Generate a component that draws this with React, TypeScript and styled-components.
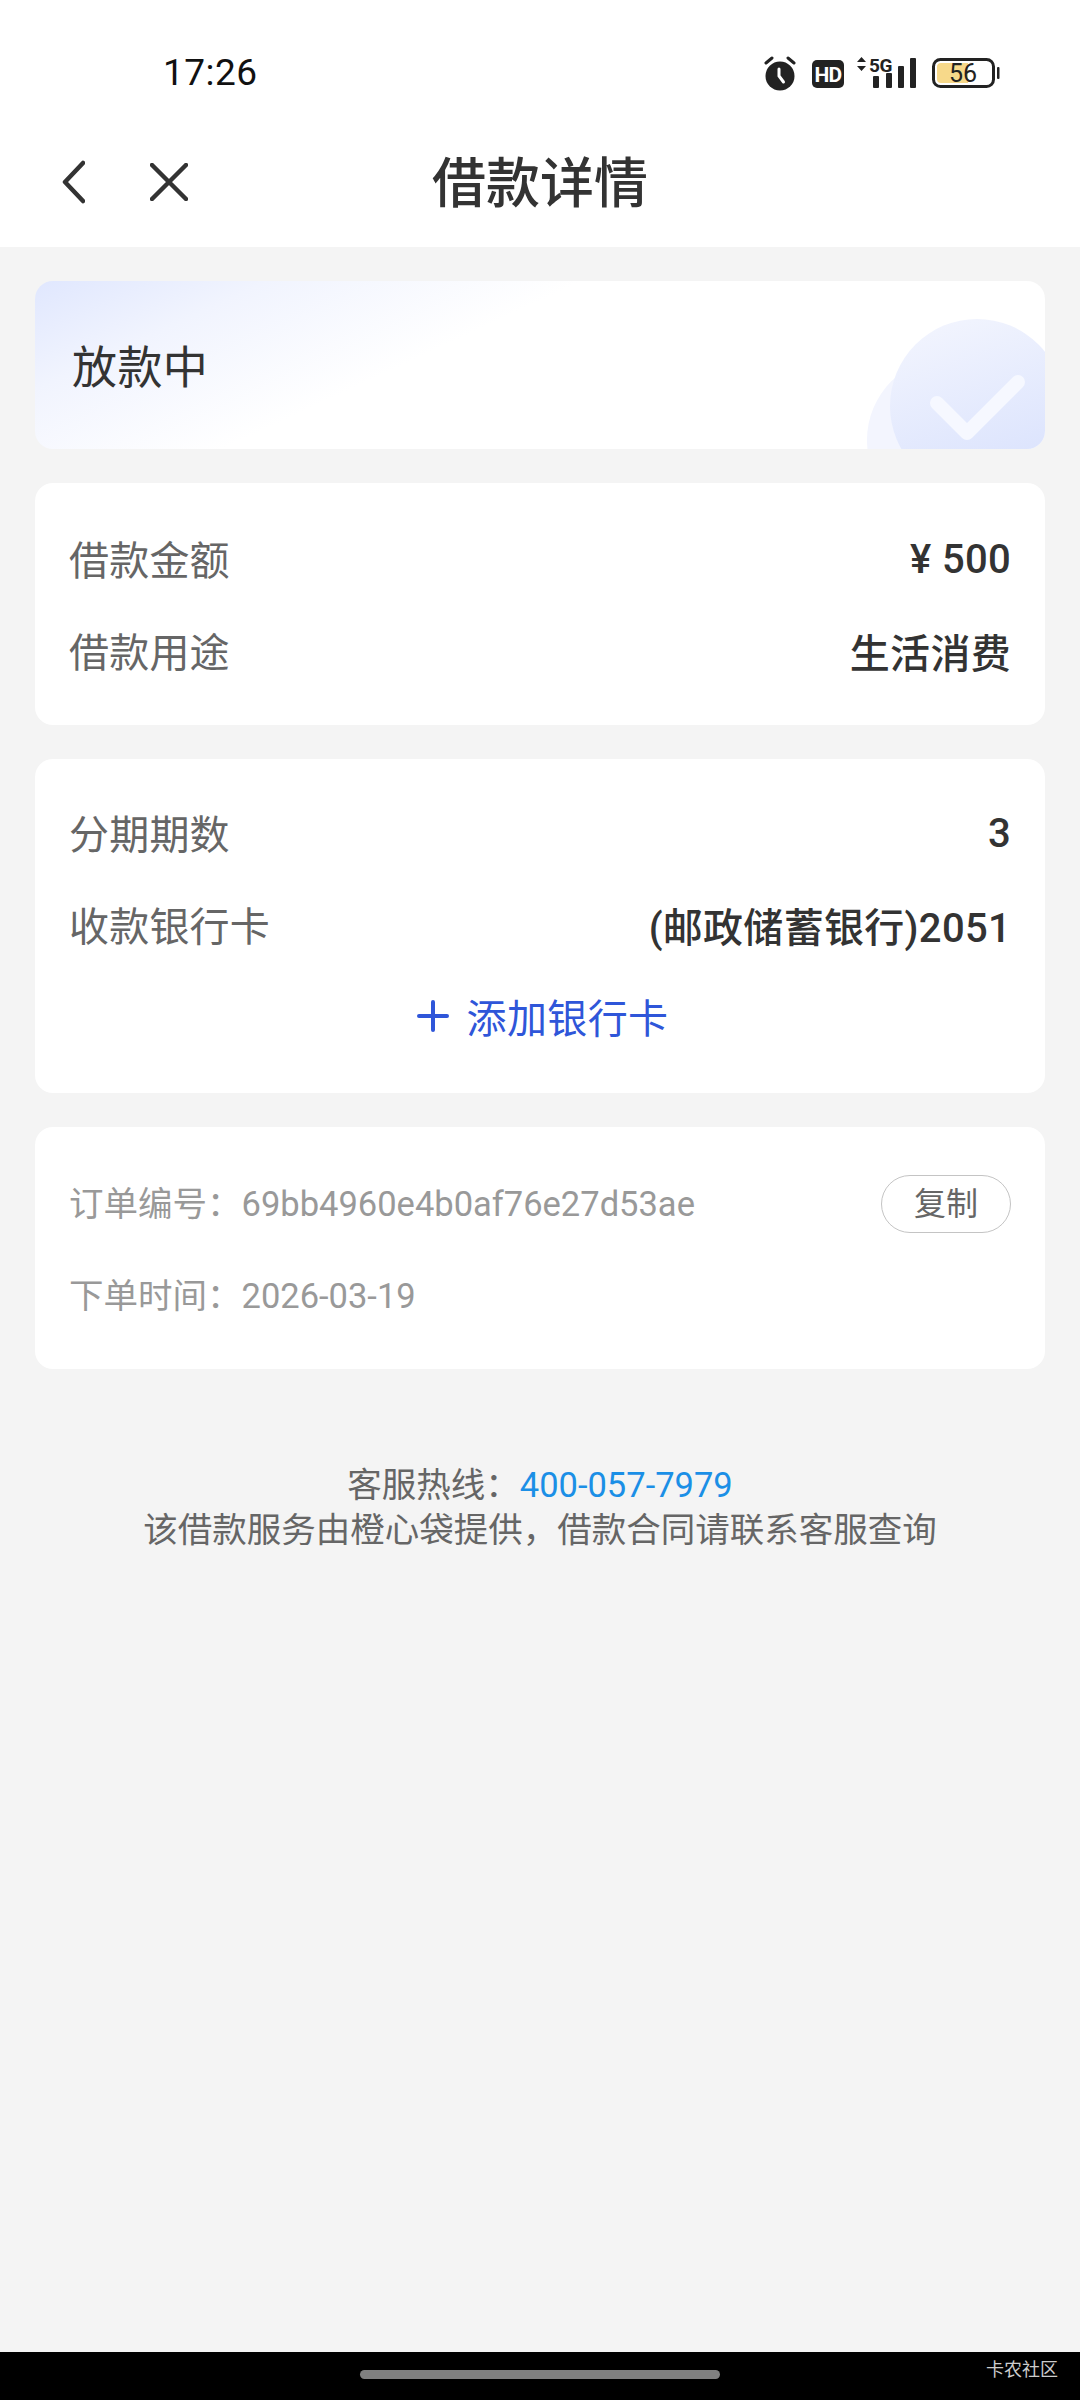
import React from "react";
import styled, { createGlobalStyle } from "styled-components";

const FONT = `Roboto, "Noto Sans CJK SC", sans-serif`;

const Global = createGlobalStyle`
  html, body { margin: 0; padding: 0; background: #f4f4f4; }
  * { box-sizing: border-box; }
`;

const Screen = styled.div`
  width: 1080px;
  height: 2400px;
  display: flex;
  flex-direction: column;
  background: #f4f4f4;
  font-family: ${FONT};
  overflow: hidden;
`;

const Header = styled.header`
  background: #fff;
  height: 247px;
  flex: none;
`;

const StatusBar = styled.div`
  height: 117px;
  padding: 55px 80px 0 163px;
  display: flex;
  justify-content: space-between;
  align-items: flex-start;
`;

const Clock = styled.span`
  font-size: 37px;
  line-height: 36px;
  color: #111;
  letter-spacing: 0.5px;
`;

const StatusIcons = styled.svg`
  display: block;
  width: 236px;
  height: 36px;
`;

const Nav = styled.nav`
  height: 130px;
  display: grid;
  grid-template-columns: 1fr auto 1fr;
  align-items: center;
`;

const NavButtons = styled.div`
  display: flex;
  align-items: center;
  gap: 65px;
  padding-left: 62px;
`;

const IconSvg = styled.svg`
  display: block;
  fill: none;
  stroke: #333;
  stroke-width: 4.5;
  stroke-linecap: round;
  stroke-linejoin: round;
`;

const Title = styled.h1`
  margin: 5px 0 0;
  font-size: 54px;
  line-height: 64px;
  font-weight: 500;
  color: #333;
`;

const Main = styled.main`
  flex: 1;
  padding: 34px 35px 0;
  display: flex;
  flex-direction: column;
  gap: 34px;
`;

const Banner = styled.section`
  position: relative;
  height: 168px;
  border-radius: 18px;
  overflow: hidden;
  padding-left: 37px;
  display: flex;
  align-items: center;
  background: linear-gradient(155deg, #e0e7fe 0%, #f1f4fe 17%, #fff 40%);
`;

const BannerText = styled.span`
  font-size: 45px;
  color: #333;
  line-height: 60px;
  margin-top: 7px;
  letter-spacing: 0.4px;
`;

const BannerArt = styled.svg`
  position: absolute;
  right: 0;
  bottom: 0;
  width: 180px;
  height: 140px;
`;

const Card = styled.section<{ $top: number; $bottom: number }>`
  background: #fff;
  border-radius: 18px;
  padding: ${(p) => p.$top}px 35px ${(p) => p.$bottom}px;
`;

const Row = styled.div`
  height: 92px;
  display: flex;
  justify-content: space-between;
  align-items: center;
`;

const Label = styled.span`
  font-size: 40px;
  color: #666;
  margin: -2px 0 0 -1px;
  letter-spacing: 0.2px;
`;

const Value = styled.span`
  font-size: 40px;
  font-weight: 500;
  color: #333;
  letter-spacing: 0.3px;
  margin-right: -1px;
`;

const AddRow = styled.div`
  height: 90px;
  display: flex;
  justify-content: center;
  align-items: center;
  gap: 18px;
  color: #2f56d9;
  font-size: 40px;
  letter-spacing: 0.4px;
  padding-left: 5px;
`;

const Meta = styled.span`
  font-size: 34.5px;
  color: #999;
  margin: -6px 0 0 -1px;
`;

const CopyButton = styled.button`
  width: 130px;
  height: 58px;
  margin-right: -1px;
  padding: 0;
  border: 1.5px solid #c4c4c4;
  border-radius: 29px;
  background: #fff;
  color: #666;
  font-family: ${FONT};
  font-size: 32px;
  line-height: 1;
`;

const Footer = styled.footer`
  margin-top: 60px;
  text-align: center;
  font-size: 34.5px;
  line-height: 45px;
  color: #666;
`;

const Phone = styled.span`
  color: #1b8fe6;
`;

const BottomBar = styled.div`
  position: relative;
  flex: none;
  height: 48px;
  background: #000;
`;

const HomeIndicator = styled.div`
  width: 360px;
  height: 9px;
  margin: 18px auto 0;
  border-radius: 5px;
  background: #808080;
`;

const Watermark = styled.span`
  position: absolute;
  right: 22px;
  top: 5px;
  font-size: 18px;
  line-height: 26px;
  color: #ccc;
`;

export default function App() {
  return (
    <Screen>
      <Global />
      <Header>
        <StatusBar>
          <Clock>17:26</Clock>
          <StatusIcons viewBox="764 54 236 36">
            <circle cx="780" cy="75" r="14.5" fill="#222" />
            <path d="M766 62l6-5M794 62l-6-5" stroke="#222" strokeWidth="3" strokeLinecap="round" fill="none" />
            <path d="M779 68v7l4.5 6" stroke="#fff" strokeWidth="3" strokeLinecap="round" fill="none" />
            <rect x="812" y="59" width="32" height="28" rx="5" fill="#222" />
            <text x="828" y="81" textAnchor="middle" fontSize="21" fontWeight="700" fill="#fff" fontFamily="Roboto, sans-serif" letterSpacing="-0.8">HD</text>
            <path d="M861.5 56l4.5 5h-9zM861.5 70l4.5-5h-9z" fill="#222" />
            <text x="869" y="71" fontSize="19" fontWeight="700" fill="#222" fontFamily="Roboto, sans-serif" letterSpacing="-0.5">5G</text>
            <rect x="873" y="75" width="6" height="12" rx="1" fill="#222" />
            <rect x="886" y="72" width="6" height="15" rx="1" fill="#222" />
            <rect x="898" y="65" width="6" height="22" rx="1" fill="#222" />
            <rect x="910" y="57" width="6" height="30" rx="1" fill="#222" />
            <rect x="933.5" y="58.5" width="60" height="27" rx="7" fill="#fff" stroke="#222" strokeWidth="3" />
            <path d="M941 62h27v20h-27a4 4 0 0 1-4-4V66a4 4 0 0 1 4-4z" fill="#f7d98a" />
            <rect x="997" y="66" width="2.5" height="12" rx="1" fill="#222" />
            <text x="963" y="81" textAnchor="middle" fontSize="25" fill="#222" fontFamily="Roboto, sans-serif">56</text>
          </StatusIcons>
        </StatusBar>
        <Nav>
          <NavButtons>
            <IconSvg width="23" height="44" viewBox="0 0 23 44">
              <path d="M21 3L3 22l18 19" />
            </IconSvg>
            <IconSvg width="38" height="38" viewBox="0 0 38 38">
              <path d="M2 2l34 34M36 2L2 36" />
            </IconSvg>
          </NavButtons>
          <Title>借款详情</Title>
          <div />
        </Nav>
      </Header>
      <Main>
        <Banner>
          <BannerText>放款中</BannerText>
          <BannerArt viewBox="865 309 180 140">
            <defs>
              <linearGradient id="disc" x1="0" y1="0" x2="0.35" y2="1">
                <stop offset="0" stopColor="#f4f6fe" />
                <stop offset="1" stopColor="#dbe3fd" />
              </linearGradient>
            </defs>
            <circle cx="950" cy="440" r="83" fill="#f3f5fe" />
            <circle cx="977" cy="406" r="87" fill="url(#disc)" />
            <path d="M937 403l30 30 51-51" fill="none" stroke="#f6f8ff" strokeWidth="14" strokeLinecap="round" strokeLinejoin="round" />
          </BannerArt>
        </Banner>
        <Card $top={30} $bottom={28}>
          <Row>
            <Label>借款金额</Label>
            <Value>¥ 500</Value>
          </Row>
          <Row>
            <Label>借款用途</Label>
            <Value>生活消费</Value>
          </Row>
        </Card>
        <Card $top={28} $bottom={32}>
          <Row>
            <Label>分期期数</Label>
            <Value>3</Value>
          </Row>
          <Row>
            <Label>收款银行卡</Label>
            <Value>(邮政储蓄银行)2051</Value>
          </Row>
          <AddRow>
            <svg width="32" height="32" viewBox="0 0 32 32" fill="none" stroke="#2f56d9" strokeWidth="4" strokeLinecap="round">
              <path d="M16 2v28M2 16h28" />
            </svg>
            <span>添加银行卡</span>
          </AddRow>
        </Card>
        <Card $top={31} $bottom={27}>
          <Row>
            <Meta>{"订单编号\uFF1A69bb4960e4b0af76e27d53ae"}</Meta>
            <CopyButton>复制</CopyButton>
          </Row>
          <Row>
            <Meta>{"下单时间\uFF1A2026-03-19"}</Meta>
          </Row>
        </Card>
        <Footer>
          {"客服热线\uFF1A"}<Phone>400-057-7979</Phone>
          <br />
          {"该借款服务由橙心袋提供\uFF0C借款合同请联系客服查询"}
        </Footer>
      </Main>
      <BottomBar>
        <HomeIndicator />
        <Watermark>卡农社区</Watermark>
      </BottomBar>
    </Screen>
  );
}
